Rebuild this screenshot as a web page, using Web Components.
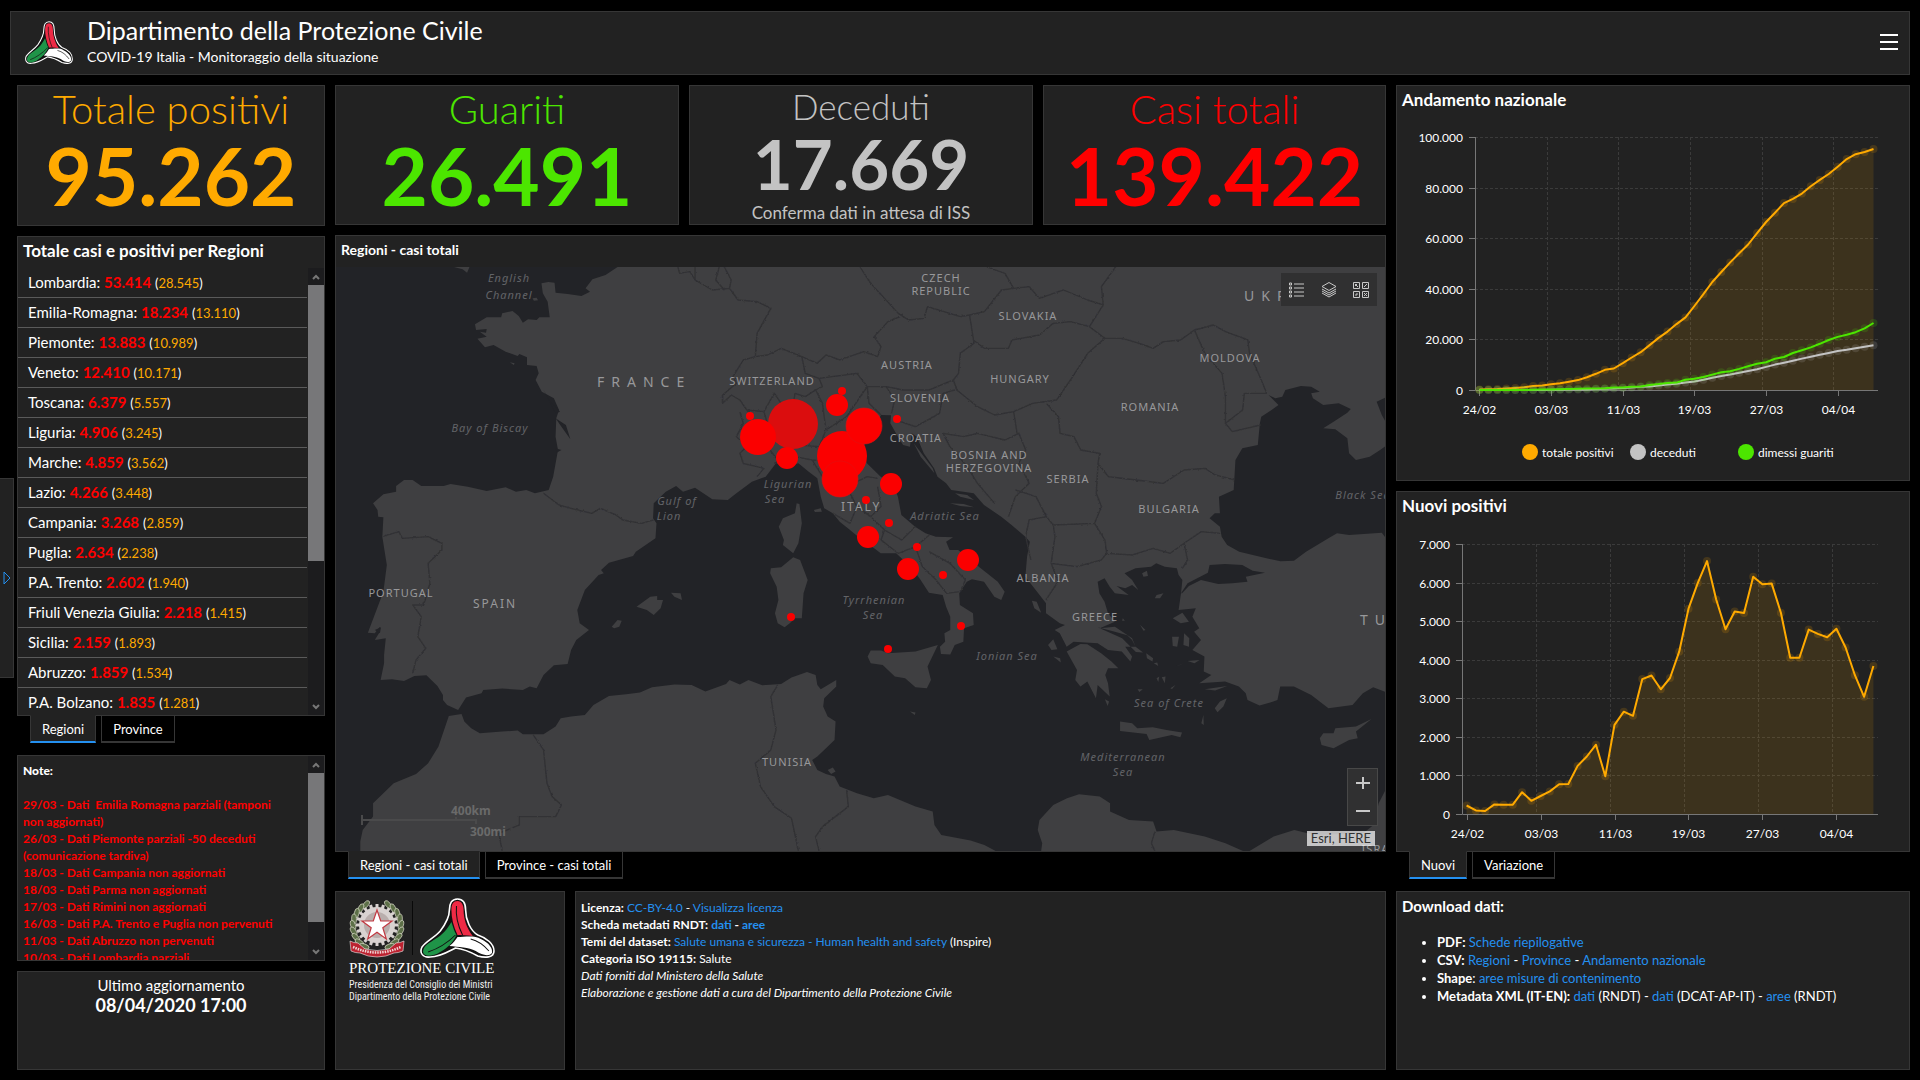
<!DOCTYPE html>
<html lang="it">
<head>
<meta charset="utf-8">
<title>COVID-19 Italia - Monitoraggio della situazione</title>
<style>
  :root {
    --panel: #222;
    --line: #363636;
    --accent: #2490f0;
    --orange: #ffaa00;
    --green: #4ce600;
    --grey: #c3c3c3;
    --red: #ff0000;
  }
  * { box-sizing: border-box; }
  body {
    margin: 0;
    background: #000;
    color: #fff;
    font-family: Lato, "Liberation Sans", sans-serif;
    font-size: 14px;
  }
  a { color: var(--accent); text-decoration: none; }
</style>
</head>
<body>
<pc-dashboard>
  <pc-header slot="header">
    <span slot="title">Dipartimento della Protezione Civile</span>
    <span slot="subtitle">COVID-19 Italia - Monitoraggio della situazione</span>
  </pc-header>
  <pc-drawer slot="drawer"></pc-drawer>

  <pc-column slot="left">
    <pc-panel style="--grow: 139"><pc-kpi style="--kpi: var(--orange)" label="Totale positivi" value="95.262"></pc-kpi></pc-panel>
    <pc-panel style="--grow: 478" heading="Totale casi e positivi per Regioni"><pc-regions></pc-regions></pc-panel>
    <pc-tabs tabs="Regioni|Province"></pc-tabs>
    <pc-panel style="--grow: 204"><pc-notes></pc-notes></pc-panel>
    <pc-panel style="--grow: 97"><pc-updated>08/04/2020 17:00</pc-updated></pc-panel>
  </pc-column>

  <pc-column slot="center">
    <pc-row style="--grow: 140; --cols: 344fr 344fr 343fr">
      <pc-panel><pc-kpi style="--kpi: var(--green)" label="Guariti" value="26.491"></pc-kpi></pc-panel>
      <pc-panel><pc-kpi small style="--kpi: var(--grey)" label="Deceduti" value="17.669" note="Conferma dati in attesa di ISS"></pc-kpi></pc-panel>
      <pc-panel><pc-kpi style="--kpi: var(--red)" label="Casi totali" value="139.422"></pc-kpi></pc-panel>
    </pc-row>
    <pc-panel style="--grow: 615; --title: 14px" heading="Regioni - casi totali"><pc-map></pc-map></pc-panel>
    <pc-tabs tabs="Regioni - casi totali|Province - casi totali"></pc-tabs>
    <pc-row style="--grow: 179; --cols: 230fr 811fr">
      <pc-panel><pc-institution></pc-institution></pc-panel>
      <pc-panel><pc-licence>
        <b>Licenza:</b> <a href="#licenza">CC-BY-4.0</a> - <a href="#visualizza">Visualizza licenza</a><br>
        <b>Scheda metadati RNDT: <a href="#dati">dati</a> - <a href="#aree">aree</a></b><br>
        <b>Temi del dataset:</b> <a href="#temi">Salute umana e sicurezza - Human health and safety</a> (Inspire)<br>
        <b>Categoria ISO 19115:</b> Salute<br>
        <i>Dati forniti dal Ministero della Salute</i><br>
        <i>Elaborazione e gestione dati a cura del Dipartimento della Protezione Civile</i>
      </pc-licence></pc-panel>
    </pc-row>
  </pc-column>

  <pc-column slot="right">
    <pc-panel style="--grow: 394" heading="Andamento nazionale"><pc-chart data-set="andamento"></pc-chart></pc-panel>
    <pc-panel style="--grow: 359" heading="Nuovi positivi"><pc-chart data-set="nuovi"></pc-chart></pc-panel>
    <pc-tabs tabs="Nuovi|Variazione"></pc-tabs>
    <pc-panel style="--grow: 177; --title: 15px" heading="Download dati:"><pc-downloads></pc-downloads></pc-panel>
  </pc-column>
</pc-dashboard>

<script>
const RESET = '*, *::before { box-sizing: border-box; } a { color: var(--accent); text-decoration: none; }';

class PcElement extends HTMLElement {
  constructor() {
    super();
    this.attachShadow({ mode: 'open' });
  }

  connectedCallback() {
    this.shadowRoot.innerHTML = `<style>${RESET}</style>` + this.render();
  }
}

// Knot logo of the Protezione Civile
const knot = (w, h) => `
  <svg width="${w}" height="${h}" viewBox="0 0 74 60" preserveAspectRatio="none" aria-hidden="true">
    <path fill="#111" stroke="#fff" stroke-width="1.6" d="M37 1C43 1 45 6 45 12 45 22 50 33 57 37 66 40 73 46 73 53 73 60 64 60 57 58 50 54 43 51 35 50 29 53 20 59 10 59 3 60-1 55 2 49 6 43 14 40 20 33 26 25 29 18 29 12 29 6 31 1 37 1Z"/>
    <path fill="#ee2a45" d="M37 3C41 3 43 7 43 12 43 21 46 30 52 38 46 37 41 37 37 37 33 28 31 20 31 12 31 6 33 3 37 3Z"/>
    <path fill="#1f9448" d="M31 24C33 30 34 34 36 37 33 44 27 50 20 54 12 59 4 59 3 54 3 48 9 45 15 41 22 37 27 31 31 24Z"/>
    <path fill="#fff" d="M37 39C44 39 54 37 60 41 68 45 72 50 71 55 68 59 61 57 55 53 48 49 38 49 29 48 33 45 35 42 37 39Z"/>
    <path fill="none" stroke="#111" stroke-width="1" d="M36 8C35 18 38 29 42 37M8 54C17 51 27 45 35 37M50 41C58 43 63 47 68 53"/>
  </svg>`;

class PcDashboard extends PcElement {
  render() {
    return `
      <style>
        :host { display: flex; flex-direction: column; gap: 10px; min-height: 100vh; padding: 11px 10px 10px; position: relative; }
        main { flex: 1; display: grid; grid-template-columns: 308fr 1051fr 514fr; gap: 10px; padding-left: 7px; }
      </style>
      <slot name="header"></slot>
      <main>
        <slot name="left"></slot>
        <slot name="center"></slot>
        <slot name="right"></slot>
      </main>
      <slot name="drawer"></slot>`;
  }
}

class PcHeader extends PcElement {
  render() {
    return `
      <style>
        :host { display: flex; align-items: center; height: 64px; padding: 0 11px 2px 14px; background: var(--panel); border: 1px solid var(--line); }
        .names { flex: 1; padding-left: 14px; }
        h1, p { margin: 0; font-weight: 400; }
        h1 { font-size: 25px; line-height: 30px; }
        p { font-size: 14px; line-height: 24px; }
        button { border: 0; padding: 0; background: none; width: 18px; height: 18px; display: flex; }
      </style>
      ${knot(48, 43)}
      <div class="names"><h1><slot name="title"></slot></h1><p><slot name="subtitle"></slot></p></div>
      <button aria-label="Menu"><svg width="18" height="18"><path d="M0 2h18M0 9h18M0 16h18" stroke="#fff" stroke-width="2"/></svg></button>`;
  }
}

class PcDrawer extends PcElement {
  render() {
    return `
      <style>
        :host { position: absolute; left: 0; top: 478px; }
        button { width: 14px; height: 200px; padding: 0 0 0 3px; display: flex; align-items: center; background: var(--panel); border: 1px solid var(--line); border-left: 0; }
      </style>
      <button aria-label="Apri pannello"><svg width="8" height="14"><path d="M1 1v12l6-6z" fill="none" stroke="#2490f0"/></svg></button>`;
  }
}

class PcColumn extends PcElement {
  render() {
    return `<style>:host { display: flex; flex-direction: column; gap: 10px; min-width: 0; }</style><slot></slot>`;
  }
}

class PcRow extends PcElement {
  render() {
    return `<style>:host { flex: var(--grow) 1 0; display: grid; grid-template-columns: var(--cols); gap: 10px; min-height: 0; }</style><slot></slot>`;
  }
}

class PcPanel extends PcElement {
  render() {
    const heading = this.getAttribute('heading');
    return `
      <style>
        :host { flex: var(--grow, 1) 1 0; display: flex; flex-direction: column; min-width: 0; min-height: 0; overflow: hidden; background: var(--panel); border: 1px solid var(--line); }
        h2 { margin: 0; padding: 0 5px 3px; font-size: var(--title, 17px); line-height: 28px; font-weight: 700; }
      </style>
      ${heading ? `<h2>${heading}</h2>` : ''}
      <slot></slot>`;
  }
}

class PcKpi extends PcElement {
  render() {
    const note = this.getAttribute('note');
    return `
      <style>
        :host { flex: 1; display: flex; flex-direction: column; align-items: center; justify-content: center; padding-bottom: 8px; color: var(--kpi); }
        .label { font-size: 40px; line-height: 46px; font-weight: 300; }
        .value { font-size: 80px; line-height: 86px; font-weight: 700; }
        .note { font-size: 17px; line-height: 22px; }
        :host([small]) { padding-bottom: 0; }
        :host([small]) .label { font-size: 35px; line-height: 40px; }
        :host([small]) .value { font-size: 69px; line-height: 76px; }
      </style>
      <div class="label">${this.getAttribute('label')}</div>
      <div class="value">${this.getAttribute('value')}</div>
      ${note ? `<div class="note">${note}</div>` : ''}`;
  }
}

class PcScrollbar extends PcElement {
  render() {
    return `
      <style>
        :host { display: flex; flex-direction: column; width: 16px; background: #1c1c1e; }
        span { height: 17px; display: flex; align-items: center; justify-content: center; }
        .thumb { flex: var(--thumb) 1 0; background: #777779; }
        .rest { flex: var(--rest) 1 0; }
        path { fill: none; stroke: #777; stroke-width: 2; }
      </style>
      <span><svg width="8" height="6"><path d="M1 5l3-3 3 3"/></svg></span>
      <div class="thumb"></div><div class="rest"></div>
      <span><svg width="8" height="6"><path d="M1 1l3 3 3-3"/></svg></span>`;
  }
}

const REGIONS = [
  ['Lombardia', '53.414', '28.545'], ['Emilia-Romagna', '18.234', '13.110'], ['Piemonte', '13.883', '10.989'],
  ['Veneto', '12.410', '10.171'], ['Toscana', '6.379', '5.557'], ['Liguria', '4.906', '3.245'],
  ['Marche', '4.859', '3.562'], ['Lazio', '4.266', '3.448'], ['Campania', '3.268', '2.859'],
  ['Puglia', '2.634', '2.238'], ['P.A. Trento', '2.602', '1.940'], ['Friuli Venezia Giulia', '2.218', '1.415'],
  ['Sicilia', '2.159', '1.893'], ['Abruzzo', '1.859', '1.534'], ['P.A. Bolzano', '1.835', '1.281']
];

class PcRegions extends PcElement {
  render() {
    return `
      <style>
        :host { flex: 1; display: flex; min-height: 0; }
        ul { flex: 1; margin: 0 1px 0 0; padding: 0; list-style: none; overflow: hidden; }
        li { height: 30px; padding-left: 10px; border-bottom: 1px solid #5a5a5a; line-height: 28px; font-size: 15px; white-space: nowrap; }
        b { color: var(--red); }
        small { font-size: 13px; }
        span { color: var(--orange); }
        pc-scrollbar { --thumb: 277; --rest: 137; }
      </style>
      <ul>${REGIONS.map(([name, total, active]) => `<li>${name}: <b>${total}</b> <small>(<span>${active}</span>)</small></li>`).join('')}</ul>
      <pc-scrollbar></pc-scrollbar>`;
  }
}

class PcTabs extends PcElement {
  render() {
    return `
      <style>
        :host { display: flex; gap: 5px; height: 28px; margin: -11px 0 2px; padding-left: 13px; position: relative; }
        button { padding: 0 11px; font: inherit; font-size: 13px; color: #fff; background: #000; border: 1px solid var(--line); border-width: 1px 1px 2px; }
        .on { background: var(--panel); border-top-color: var(--panel); border-bottom-color: var(--accent); }
      </style>
      ${this.getAttribute('tabs').split('|').map((t, i) => `<button${i ? '' : ' class="on"'}>${t}</button>`).join('')}`;
  }
}

class PcNotes extends PcElement {
  render() {
    return `
      <style>
        :host { flex: 1; display: flex; min-height: 0; font-size: 12px; line-height: 17px; font-weight: 700; }
        div { flex: 1; padding: 6px 20px 0 5px; overflow: hidden; white-space: pre-wrap; color: var(--red); }
        strong { color: #fff; }
        pc-scrollbar { --thumb: 149; --rest: 21; }
      </style>
      <div><strong>Note:</strong>

29/03 - Dati  Emilia Romagna parziali (tamponi non aggiornati)
26/03 - Dati Piemonte parziali -50 deceduti (comunicazione tardiva)
18/03 - Dati Campania non aggiornati
18/03 - Dati Parma non aggiornati
17/03 - Dati Rimini non aggiornati
16/03 - Dati P.A. Trento e Puglia non pervenuti
11/03 - Dati Abruzzo non pervenuti
10/03 - Dati Lombardia parziali</div>
      <pc-scrollbar></pc-scrollbar>`;
  }
}

class PcUpdated extends PcElement {
  render() {
    return `
      <style>
        :host { display: block; padding-top: 3px; text-align: center; font-size: 15px; line-height: 20px; }
        strong { display: block; font-size: 18px; line-height: 20px; }
      </style>
      Ultimo aggiornamento<strong><slot></slot></strong>`;
  }
}

class PcInstitution extends PcElement {
  render() {
    const leaf = (x, y, a) => `<ellipse cx="${x}" cy="${y}" rx="2.4" ry="5" transform="rotate(${a} ${x} ${y})"/>`;
    let leaves = '';
    for (let i = 0; i < 9; i++) {
      const t = (118 + i * 15) * Math.PI / 180;
      const x = 28 + 24 * Math.cos(t), y = 28 - 24 * Math.sin(t);
      leaves += leaf(x, y, 40 - i * 14) + leaf(56 - x, y, i * 14 - 40);
    }
    const teeth = Array.from({ length: 20 }, (_, i) => `<rect x="26.5" y="6" width="3" height="5" transform="rotate(${i * 18} 28 27)"/>`).join('');
    return `
      <style>
        :host { display: flex; flex-direction: column; padding: 6px 0 0 13px; color: #eee; white-space: nowrap; }
        .marks { display: flex; align-items: center; gap: 7px; }
        i { width: 1px; height: 54px; background: #090909; }
        b { font: 400 15px/21px "Liberation Serif", serif; color: #fff; }
        span { font: 10px/12px "Liberation Sans Narrow", "Roboto Condensed", "Liberation Sans", sans-serif; }
      </style>
      <div class="marks">
        <svg width="56" height="60" viewBox="0 0 56 60" aria-hidden="true">
          <g fill="#5d7048" stroke="#d9d9c8" stroke-width=".7">${leaves}</g>
          <g fill="#d8d2d0">${teeth}<circle cx="28" cy="27" r="18"/></g>
          <circle cx="28" cy="27" r="13" fill="#b9aeac"/>
          <path d="M28 12l3.700 11h11.300l-9.200 6.800 3.500 11.200-9.300-6.800-9.300 6.800 3.500-11.200L13 23h11.300z" fill="#fff" stroke="#c23a42" stroke-width="1.200"/>
          <path d="M1 43q4 2 8 2l7 6q12 3 24 0l7-6q4 0 8-2l-1 10q-5 2-9 2-8 4-17 4t-17-4q-5 0-9-2z" fill="#bc2230" stroke="#eee" stroke-width=".6"/>
          <path d="M4 49q24 11 48 0" fill="none" stroke="#f2d5d5" stroke-width="2.500" stroke-dasharray="1.500 1"/>
        </svg>
        <i></i>
        ${knot(75, 60)}
      </div>
      <b>PROTEZIONE CIVILE</b>
      <span>Presidenza del Consiglio dei Ministri</span>
      <span>Dipartimento della Protezione Civile</span>`;
  }
}

class PcLicence extends PcElement {
  render() {
    return `<style>:host { display: block; padding: 7px 5px; font-size: 12px; line-height: 17px; }</style><slot></slot>`;
  }
}

class PcDownloads extends PcElement {
  render() {
    return `
      <style>
        ul { margin: 10px 0 0; padding: 0 0 0 40px; font-size: 13px; line-height: 18px; }
      </style>
      <ul>
        <li><b>PDF:</b> <a href="#schede">Schede riepilogative</a></li>
        <li><b>CSV:</b> <a href="#regioni">Regioni</a> - <a href="#province">Province</a> - <a href="#andamento">Andamento nazionale</a></li>
        <li><b>Shape</b>: <a href="#contenimento">aree misure di contenimento</a></li>
        <li><b>Metadata XML (IT-EN):</b> <a href="#rndt">dati</a> (RNDT) - <a href="#dcat">dati</a> (DCAT-AP-IT) - <a href="#aree">aree</a> (RNDT)</li>
      </ul>`;
  }
}

const CHARTS = {
  andamento: {
    left: 78, top: 20, base: 273, right: 481, height: 363, max: 100000, step: 20000,
    series: [
      { name: 'totale positivi', color: '#ffaa00', fill: true, values: [221, 311, 385, 588, 821, 1049, 1577, 1835, 2263, 2706, 3296, 3916, 5061, 6387, 7985, 8514, 10590, 12839, 14955, 17750, 20603, 23073, 26062, 28710, 33190, 37860, 42681, 46638, 50418, 54030, 57521, 62013, 66414, 70065, 73880, 75528, 77635, 80572, 83049, 85388, 88274, 91246, 93187, 94067, 95262] },
      { name: 'deceduti', color: '#c3c3c3', values: [7, 10, 12, 17, 21, 29, 34, 52, 79, 107, 148, 197, 233, 366, 463, 631, 827, 1016, 1266, 1441, 1809, 2158, 2503, 2978, 3405, 4032, 4825, 5476, 6077, 6820, 7503, 8215, 9134, 10023, 10779, 11591, 12428, 13155, 13915, 14681, 15362, 15887, 16523, 17127, 17669] },
      { name: 'dimessi guariti', color: '#4ce600', values: [1, 1, 3, 45, 46, 50, 83, 149, 160, 276, 414, 523, 589, 622, 724, 1004, 1045, 1258, 1439, 1966, 2335, 2749, 2941, 4025, 4440, 5129, 6072, 7024, 7432, 8326, 9362, 10361, 10950, 12384, 13030, 14620, 15729, 16847, 18278, 19758, 20996, 21815, 22837, 24392, 26491] }
    ]
  },
  nuovi: {
    left: 65, top: 21, base: 291, right: 481, height: 328, max: 7000, step: 1000,
    series: [
      { name: 'nuovi positivi', color: '#ffaa00', fill: true, values: [221, 93, 78, 250, 238, 240, 566, 342, 466, 587, 769, 778, 1247, 1492, 1797, 977, 2313, 2651, 2547, 3497, 3590, 3233, 3526, 4207, 5322, 5986, 6557, 5560, 4789, 5249, 5210, 6153, 5959, 5974, 5217, 4050, 4053, 4782, 4668, 4585, 4805, 4316, 3599, 3039, 3836] }
    ]
  }
};
const DAYS = ['24/02', '03/03', '11/03', '19/03', '27/03', '04/04'];
const thousands = n => String(n).replace(/\B(?=(\d{3})+$)/g, '.');

class PcChart extends PcElement {
  render() {
    const c = CHARTS[this.dataset.set];
    const band = (c.right - c.left) / 45;
    const x = i => c.left + band * (i + 0.5);
    const y = v => c.base - (c.base - c.top) * v / c.max;
    let out = '';

    for (let v = 0; v <= c.max; v += c.step) {
      const py = Math.round(y(v)) + 0.5;
      if (v) out += `<path class="grid" d="M${c.left} ${py}H${c.right}"/>`;
      out += `<path class="axis" d="M${c.left - 6} ${py}h6"/><text x="${c.left - 12}" y="${py + 4}" text-anchor="end">${thousands(v)}</text>`;
    }
    DAYS.forEach((day, i) => {
      const tick = Math.round(x(i * 8)) + 0.5;
      if (i) out += `<path class="grid" d="M${Math.round(c.left + band * i * 8) + 0.5} ${c.top}V${c.base}"/>`;
      out += `<path class="axis" d="M${tick} ${c.base}v6"/><text x="${tick}" y="${c.base + 24}" text-anchor="middle">${day}</text>`;
    });
    out += `<path class="axis" d="M${c.left + 0.5} ${c.top}V${c.base + 0.5}H${c.right}"/>`;

    c.series.forEach(s => {
      const pts = s.values.map((v, i) => [x(i).toFixed(1), y(v).toFixed(1)]);
      const line = 'M' + pts.map(p => p.join(' ')).join('L');
      if (s.fill) out += `<path d="${line}V${c.base}H${x(0)}Z" fill="${s.color}" opacity=".12"/>`;
      out += `<g fill="${s.color}" fill-opacity=".16">${pts.map(p => `<circle cx="${p[0]}" cy="${p[1]}" r="4"/>`).join('')}</g>`;
      out += `<path d="${line}" fill="none" stroke="${s.color}" stroke-width="2" stroke-linejoin="round"/>`;
    });

    if (c.series.length > 1) {
      c.series.forEach((s, i) => {
        const lx = 133 + i * 108;
        out += `<circle cx="${lx}" cy="335" r="8" fill="${s.color}"/><text x="${lx + 12}" y="340">${s.name}</text>`;
      });
    }
    return `
      <style>
        :host { flex: 1; display: block; min-height: 0; }
        svg { display: block; width: 100%; height: 100%; }
        text { fill: #fff; font-size: 12px; }
        .grid { fill: none; stroke: #3b3b3b; stroke-dasharray: 3 2; }
        .axis { fill: none; stroke: #777; }
      </style>
      <svg viewBox="0 0 512 ${c.height}">${out}</svg>`;
  }
}

// Coastlines and borders share one grid that is finer than the map's own units
const LAND = [
  'M835 111 800 135 762 148 742 175 755 185 730 198 690 192 655 188 652 158 634 156 614 160 618 190 632 215 638 262 608 262 600 270 575 268 560 278 548 258 530 243 500 250 497 262 455 262 421 283 424 300 455 297 453 308 435 305 455 320 428 326 450 352 475 345 510 365 545 378 550 372 572 382 572 405 600 408 606 430 597 450 615 485 650 505 665 540 657 565 655 620 662 660 648 740 635 780 595 790 570 780 540 785 510 772 455 783 400 770 350 762 330 768 265 768 240 750 215 750 192 768 192 785 155 793 125 820 138 840 140 860 155 862 152 920 158 960 165 1005 155 1085 135 1140 110 1208 130 1210 145 1190 145 1205 130 1230 162 1225 157 1275 157 1300 147 1350 180 1348 215 1353 245 1338 280 1336 312 1368 328 1395 328 1410 340 1425 372 1440 395 1403 440 1390 445 1380 500 1376 560 1380 580 1370 600 1375 620 1335 650 1306 690 1302 700 1260 715 1230 752 1200 725 1180 718 1140 740 1080 780 1035 795 1030 787 1020 810 998 880 978 888 965 945 925 948 880 938 865 940 820 975 785 1005 768 1025 785 1060 773 1110 808 1155 810 1180 790 1225 755 1265 740 1295 700 1330 708 1360 700 1390 725 1415 745 1425 800 1435 835 1460 850 1480 875 1510 900 1545 930 1580 955 1599 970 1644 970 1690 1015 1715 1050 1739 1088 1779 1095 1789 1130 1801 1160 1801 1200 1784 1210 1786 1235 1771 1250 1774 1272 1801 1274 1814 1245 1839 1235 1841 1195 1869 1185 1867 1150 1829 1125 1827 1090 1849 1055 1864 1048 1899 1055 1929 1100 1949 1110 1959 1085 1939 1055 1884 1010 1850 980 1824 960 1799 960 1789 935 1809 922 1759 920 1729 910 1699 890 1659 855 1649 800 1634 760 1599 740 1559 700 1545 660 1570 610 1600 555 1629 556 1627 580 1649 620 1664 645 1684 650 1689 610 1704 620 1724 670 1754 715 1764 740 1789 760 1804 780 1869 790 1899 825 1949 860 1979 885 2019 920 2032 935 2024 980 2019 1040 2049 1080 2079 1120 2079 1150 2119 1180 2134 1185 2104 1200 2119 1210 2139 1250 2159 1235 2229 1240 2259 1260 2299 1265 2324 1295 2329 1280 2309 1250 2339 1250 2329 1225 2279 1190 2235 1195 2279 1175 2259 1150 2249 1115 2234 1090 2229 1055 2249 1045 2264 1070 2279 1090 2319 1095 2284 1068 2309 1075 2329 1065 2347 1080 2329 1050 2307 1030 2339 1015 2384 1010 2399 1000 2424 1010 2459 1015 2464 1035 2475 1050 2471 1090 2464 1140 2514 1135 2504 1160 2524 1195 2509 1205 2529 1230 2504 1260 2539 1280 2537 1325 2559 1335 2524 1360 2599 1355 2639 1370 2659 1390 2664 1410 2699 1427 2739 1415 2751 1410 2759 1370 2799 1370 2849 1395 2899 1435 2969 1425 2999 1390 3029 1372 3070 1388V100H835Z',
  'M88 1870 88 1835 95 1800 125 1760 125 1720 185 1660 250 1632 285 1600 315 1550 345 1458 382 1452 390 1475 410 1495 435 1510 500 1505 545 1502 560 1513 620 1513 655 1490 670 1465 700 1460 740 1455 765 1425 810 1398 860 1393 900 1388 935 1372 1000 1364 1050 1365 1090 1385 1150 1362 1160 1350 1190 1364 1215 1350 1255 1366 1310 1362 1340 1343 1385 1326 1410 1335 1415 1365 1425 1378 1470 1350 1470 1370 1435 1405 1432 1430 1445 1460 1468 1475 1465 1530 1415 1580 1400 1590 1415 1620 1440 1632 1465 1640 1480 1670 1530 1690 1579 1705 1620 1695 1700 1730 1750 1745 1755 1785 1775 1815 1860 1832 1900 1845 1945 1870Z',
  'M2064 1870 2068 1840 2055 1800 2060 1770 2100 1725 2140 1705 2175 1693 2235 1700 2265 1720 2265 1745 2320 1770 2390 1775 2400 1805 2450 1800 2540 1820 2600 1840 2655 1865 2670 1863 2740 1820 2800 1800 2860 1815 3000 1810 3030 1785 3045 1720 3070 1670V1870Z',
  'M1355 820 1363 822 1370 880 1360 940 1345 970 1315 945 1318 930 1303 890 1315 865 1350 850Z',
  'M1345 982 1365 990 1387 1050 1375 1090 1370 1165 1350 1165 1335 1180 1320 1192 1300 1180 1292 1150 1302 1110 1297 1070 1278 1030 1280 1015 1310 1012Z',
  'M1561 1280 1570 1262 1600 1262 1620 1270 1700 1265 1765 1245 1735 1310 1745 1350 1733 1375 1700 1372 1670 1345 1640 1340 1605 1305 1570 1300Z',
  'M890 1130 930 1100 950 1098 950 1110 967 1110 960 1135 940 1155 920 1140Z M990 1088 1018 1090 1022 1110 1000 1100Z M818 1190 835 1170 847 1172 840 1190 825 1195Z',
  'M2294 1475 2329 1480 2344 1495 2389 1492 2429 1500 2474 1508 2469 1522 2444 1515 2379 1530 2371 1512 2294 1503Z',
  'M2139 1265 2179 1242 2199 1243 2239 1270 2269 1295 2289 1315 2259 1315 2251 1335 2259 1360 2264 1400 2229 1365 2224 1405 2199 1355 2179 1370 2164 1350 2169 1320Z',
  'M2229 1192 2279 1205 2315 1216 2329 1230 2339 1250 2361 1268 2340 1266 2300 1225Z',
  'M2874 1525 2884 1510 2914 1510 2919 1495 2979 1490 3024 1467 2979 1505 2984 1525 2959 1530 2914 1555 2879 1545Z',
  'M2569 1435 2584 1415 2604 1405 2594 1430 2577 1447Z M2530 1480 2536 1455 2537 1485Z M2447 1165 2475 1148 2494 1175 2470 1180Z M2395 1105 2400 1095 2420 1090 2410 1105Z',
  'M2445 1220 2465 1220 2460 1250 2447 1248Z M2480 1210 2495 1225 2494 1250 2478 1245Z M2490 1293 2525 1290 2510 1300Z M2455 1310 2480 1300 2468 1305Z M2540 1378 2605 1368 2570 1382Z',
  'M2085 1245 2100 1228 2112 1258 2095 1260Z M2100 1280 2120 1285 2122 1298Z M2038 1112 2052 1115 2065 1148 2045 1135Z M2370 1270 2390 1285 2388 1295 2372 1285Z M2392 1300 2402 1298 2405 1308Z M2400 1345 2408 1340 2405 1356Z M2415 1342 2426 1340 2424 1360Z M2440 1375 2455 1365 2445 1377Z M2345 1378 2360 1378 2350 1386Z M2352 1184 2368 1200 2362 1202Z M2302 1165 2308 1172 2300 1172Z M2250 1408 2262 1415 2258 1428Z M2358 1030 2372 1022 2375 1038 2362 1040Z',
  'M1405 840 1425 835 1428 845 1408 846Z M1445 1620 1460 1613 1468 1625 1455 1632Z M360 111 405 111 398 128 385 118Z M588 205 600 203 604 211 592 212Z M1684 1445 1700 1448 1698 1455Z M522 397 536 400 534 405Z',
  'M1815 790 1850 795 1870 810 1830 800Z M1800 820 1840 822 1870 832 1830 828Z M1695 640 1750 715 1755 730 1715 680Z'
].join(' ');

const WATER = [
  'M2774 480 2819 468 2849 470 2874 485 2849 490 2854 505 2884 525 2929 520 2964 537 2954 548 2914 575 2884 595 2919 598 2954 625 2959 670 2979 690 3019 680 3049 660 3070 645V930L3054 908 2959 915 2924 910 2899 925 2834 965 2799 992 2760 994 2719 985 2640 965 2605 945 2589 920 2584 890 2554 865 2569 850 2584 850 2581 800 2624 780 2629 690 2649 655 2694 645 2700 580 2704 560 2734 540 2754 525 2725 495 2745 505 2765 500Z',
  'M3070 500 3039 515 3054 555 3070 585Z',
  'M2471 1090 2490 1060 2549 1028 2554 1005 2599 1002 2649 1005 2679 1022 2715 1028 2659 1040 2664 1055 2620 1060 2579 1062 2529 1050 2494 1068 2474 1090Z',
  'M620 480 640 515 668 545 655 550Z M655 565 685 585 698 628 672 590Z M655 655 672 660 658 668Z M130 1200 148 1192 145 1210Z'
].join(' ');

const BORDERS = [
  'M620 790 665 825 700 835 760 850 785 835 830 855 850 870 905 880 940 870',
  'M152 920 200 905 210 925 285 920 325 940 325 960 285 1000 290 1060 272 1125 240 1125 265 1160 255 1220 278 1255 250 1290 240 1330',
  'M1010 111 1015 130 1045 125 1060 150 1110 180 1160 175 1185 210 1240 215 1280 235 1240 310 1235 380 M1060 111 1060 150 M1130 111 1120 150 1145 180 M1145 111 1165 150 1160 175',
  'M1235 380 1200 390 1170 440 1180 460 1140 495 1140 520 1165 495 1190 510 1210 540 1260 545 1290 490 1310 520 1345 525 1350 490 1380 500 1410 480 1430 470 1420 445 1380 430 1370 380 1310 355 1270 375 1235 380',
  'M1370 380 1415 400 1440 375 1480 390 1550 365 1590 380 1600 350 1580 320 1620 275 1655 260 M1539 111 1570 160 1650 250 1680 270 1725 265 1735 230 1830 260 1857 255 1870 340 1830 370 1825 430 1810 450 1740 480 1665 480 1615 470 1560 470 1530 430 1420 445',
  'M1890 105 1960 130 1985 175 1950 180 1900 245 1857 255 M1985 175 2030 170 2060 205 2130 180 2200 210 2245 225 2205 290 2150 275 2100 280 2060 315 1980 330 1970 355 1900 355 1868 330 M2285 105 2240 170 2245 225',
  'M2205 290 2250 325 2200 370 2150 450 2110 510 2040 520 1985 545 1930 555 1880 530 1820 480 1810 450',
  'M2250 325 2300 325 2350 340 2390 355 2420 335 2470 330 2510 300 2565 285 2600 305 2665 330 2670 370 2700 440 2720 490 2655 490 2650 540 2600 580 2620 605 2660 595 2702 585 M2510 300 2540 370 2590 430 2600 500 2600 580',
  'M2080 520 2115 560 2120 610 2160 620 2180 660 2235 670 2230 700 2260 740 2340 750 2420 760 2480 720 2540 715 2570 735 2625 750 M2230 700 2225 790 2240 830 2220 880 2250 930 2255 970 2330 975 2390 955 2440 970 2480 940 2530 905 2585 910 M2480 940 2490 990 2475 1015',
  'M1815 480 1780 490 1770 550 1700 590 1640 570 M1985 545 1995 610 M1780 610 1840 620 1880 610 1960 630 2000 610 2020 660 2000 700 2030 760 1990 800 1970 860 M1780 610 1800 650 1850 710 1880 760 1930 820 M1990 780 2050 800 2080 860 2100 885 2220 880 M2080 860 2030 870 2020 920 2035 990',
  'M2100 885 2105 920 2094 1000 2169 1010 2240 990 2255 970 M2094 1000 2114 1055 2079 1110',
  'M1190 545 1200 580 1180 620 1210 650 1190 670 1200 700 1260 715 1240 740 M1560 470 1565 520 1600 555 M1615 470 1640 510 1630 550',
  'M1290 700 1310 690 1350 680 1400 690 1430 740 1500 770 1560 740 1590 745 M1260 545 1275 600 1270 650 1300 690 M1410 480 1430 520 1440 600 1420 650 1300 640 M1440 600 1500 560 1540 500 1560 470 M1500 770 1530 830 1510 880 1460 850 M1530 830 1570 860 1600 830 1590 770 M1570 860 1610 900 1660 930 1700 890 M1610 900 1600 930 1650 970 1700 950 1740 915 M1700 950 1720 1010 1760 1050 1790 1090 1830 1085 1845 1050 1800 1000 1740 965 M1400 690 1480 700 1545 690',
  'M1300 1365 1280 1400 1295 1500 1280 1560 1235 1600 1250 1670 1290 1730 1340 1765 1360 1863 M1500 1680 1505 1730 1430 1790 1410 1820 1420 1863 M590 1515 620 1560 630 1660 645 1700 672 1725 655 1760 550 1760 550 1785 490 1810 500 1863 M2395 1805 2385 1840 2395 1863'
].join(' ');

// x, y, radius of every region's circle
const CIRCLES = [
  [842, 456, 25], [758, 437, 18], [864, 426, 18], [840, 479, 18], [787, 458, 11], [837, 405, 11], [891, 484, 11], [868, 537, 11],
  [908, 569, 11], [968, 560, 11], [750, 416, 4], [842, 391, 4], [897, 419, 4], [866, 500, 4], [889, 523, 4], [917, 547, 4],
  [943, 575, 4], [961, 626, 4], [888, 649, 4], [791, 617, 4]
];

const COUNTRIES = [
  [772, 385, 'SWITZERLAND'], [941, 282, 'CZECH'], [941, 295, 'REPUBLIC'], [1028, 320, 'SLOVAKIA'],
  [907, 369, 'AUSTRIA'], [1020, 383, 'HUNGARY'], [1230, 362, 'MOLDOVA'], [1150, 411, 'ROMANIA'], [920, 402, 'SLOVENIA'],
  [916, 442, 'CROATIA'], [989, 459, 'BOSNIA AND'], [989, 472, 'HERZEGOVINA'], [1068, 483, 'SERBIA'], [1169, 513, 'BULGARIA'],
  [1043, 582, 'ALBANIA'], [1095, 621, 'GREECE'], [401, 597, 'PORTUGAL'], [787, 766, 'TUNISIA'], [1379, 853, 'ISRAE']
];
const SEAS = [
  [509, 282, 'English'], [509, 299, 'Channel'], [490, 432, 'Bay of Biscay'], [788, 488, 'Ligurian'], [775, 503, 'Sea'],
  [677, 505, 'Gulf of'], [669, 520, 'Lion'], [945, 520, 'Adriatic Sea'], [1363, 499, 'Black Sea'], [874, 604, 'Tyrrhenian'],
  [873, 619, 'Sea'], [1007, 660, 'Ionian Sea'], [1169, 707, 'Sea of Crete'], [1123, 761, 'Mediterranean'], [1123, 776, 'Sea']
];

class PcMap extends PcElement {
  render() {
    const label = ([x, y, t]) => `<text x="${x}" y="${y}">${t}</text>`;
    return `
      <style>
        :host { flex: 1; display: block; min-height: 0; position: relative; background: #222327; overflow: hidden; }
        .map { display: block; width: 100%; height: 100%; }
        text { font: 11px "Noto Sans", sans-serif; fill: #98989a; text-anchor: middle; letter-spacing: 1px; }
        .sea text { font-style: italic; fill: #626367; }
        .wide text { font-size: 14px; text-anchor: start; letter-spacing: 7px; }
        .wide .near { font-size: 12px; letter-spacing: 2px; }
        .scale text { font-size: 12px; font-weight: 700; fill: #6a6a6a; letter-spacing: 0; text-anchor: start; }
        .tools, .zoom { position: absolute; display: flex; background: #303031; }
        .tools { right: 8px; top: 6px; }
        .zoom { right: 7px; bottom: 25px; flex-direction: column; border: 1px solid #484848; }
        button { border: 0; padding: 0; display: grid; place-items: center; background: none; width: 32px; height: 33px; color: #c8c8c8; }
        .zoom button { width: 29px; height: 28px; }
        button svg { fill: none; stroke: currentColor; }
        .credit { position: absolute; right: 10px; bottom: 5px; padding: 0 4px; font-size: 13px; line-height: 15px; color: #323232; background: rgba(255, 255, 255, .7); }
      </style>
      <svg class="map" viewBox="336 267 1049 584" preserveAspectRatio="xMidYMid slice" role="img" aria-label="Regioni - casi totali">
        <defs>
          <filter id="rough" x="0" y="0" width="1" height="1">
            <feTurbulence type="fractalNoise" baseFrequency=".12" numOctaves="2" seed="4"/>
            <feDisplacementMap in="SourceGraphic" scale="7" xChannelSelector="R" yChannelSelector="G"/>
          </filter>
        </defs>
        <g transform="translate(330 230) scale(.3444 .3333)" stroke-linejoin="round">
          <path d="${LAND}" fill="#3f3f41"/>
          <path d="${WATER}" fill="#222327"/>
          <g filter="url(#rough)"><path d="${BORDERS}" fill="none" stroke="#313134" stroke-width="4"/></g>
        </g>
        <g>${COUNTRIES.map(label).join('')}</g>
        <g class="sea">${SEAS.map(label).join('')}</g>
        <g class="wide">
          <text x="597" y="387">FRANCE</text>
          <text class="near" x="473" y="608">SPAIN</text>
          <text class="near" x="841" y="511">ITALY</text>
          <text x="1244" y="301">UKR</text>
          <text x="1360" y="625">TU</text>
        </g>
        <circle cx="793" cy="424" r="25" fill="#db0d0e"/>
        <g fill="#fb0000">${CIRCLES.map(([x, y, r]) => `<circle cx="${x}" cy="${y}" r="${r}"/>`).join('')}</g>
        <circle cx="840" cy="479" r="18" fill="none" stroke="#e01010" stroke-width=".6"/>
        <circle cx="864" cy="426" r="18" fill="none" stroke="#e01010" stroke-width=".6"/>
        <g class="scale">
          <path d="M362 815v10M362 820H477M456 820v-3M476 820v4" stroke="#4a4a4b" stroke-width="2" fill="none"/>
          <text x="451" y="815">400km</text>
          <text x="470" y="836">300mi</text>
        </g>
      </svg>
      <div class="tools">
        <button aria-label="Legenda"><svg width="16" height="16"><path d="M5 2h10M5 6h10M5 10h10M5 14h10M.5 1h2v2h-2zM.5 5h2v2h-2zM.5 9h2v2h-2zM.5 13h2v2h-2z"/></svg></button>
        <button aria-label="Livelli"><svg width="18" height="18"><path d="M9 1.500l7 4-7 4-7-4zM2 8l7 4 7-4M2 10l7 4 7-4M2 12l7 4 7-4"/></svg></button>
        <button aria-label="Mappe di base"><svg width="18" height="18"><path d="M1.500 1.500h6v6h-6zM10.500 1.500h6v6h-6zM1.500 10.500h6v6h-6zM10.500 10.500h6v6h-6zM3 3l3 3M3 5l2-2M12 6l3-3M3 14h2v-2M12 12l3 3M12 15l3-3"/></svg></button>
      </div>
      <div class="zoom">
        <button aria-label="Ingrandisci"><svg width="14" height="14" stroke-width="2"><path d="M0 7h14M7 1v12"/></svg></button>
        <button aria-label="Riduci"><svg width="14" height="14" stroke-width="2"><path d="M0 7h14"/></svg></button>
      </div>
      <div class="credit">Esri, HERE</div>`;
  }
}

customElements.define('pc-dashboard', PcDashboard);
customElements.define('pc-header', PcHeader);
customElements.define('pc-drawer', PcDrawer);
customElements.define('pc-column', PcColumn);
customElements.define('pc-row', PcRow);
customElements.define('pc-panel', PcPanel);
customElements.define('pc-kpi', PcKpi);
customElements.define('pc-scrollbar', PcScrollbar);
customElements.define('pc-regions', PcRegions);
customElements.define('pc-tabs', PcTabs);
customElements.define('pc-notes', PcNotes);
customElements.define('pc-updated', PcUpdated);
customElements.define('pc-institution', PcInstitution);
customElements.define('pc-licence', PcLicence);
customElements.define('pc-downloads', PcDownloads);
customElements.define('pc-chart', PcChart);
customElements.define('pc-map', PcMap);
</script>
</body>
</html>
